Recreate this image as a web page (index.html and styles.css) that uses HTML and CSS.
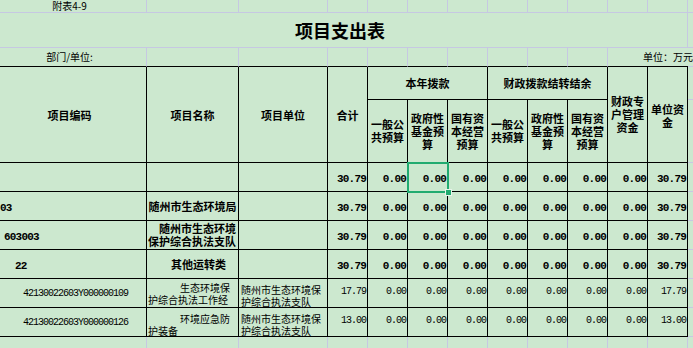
FILE: index.html
```html
<!DOCTYPE html>
<html lang="zh-CN">
<head>
<meta charset="utf-8">
<title>项目支出表</title>
<link rel="stylesheet" href="styles.css">
</head>
<body>
<div class="sheet">
  <!-- row 1 -->
  <div class="c">附表4-9</div>
  <div class="c"></div><div class="c"></div><div class="c"></div><div class="c"></div><div class="c"></div><div class="c"></div>
  <div class="c"></div><div class="c"></div><div class="c"></div><div class="c"></div><div class="c"></div><div class="c"></div>
  <!-- row 2 -->
  <div class="c title sp12">项目支出表</div>
  <div class="c"></div>
  <!-- row 3 -->
  <div class="c tb">部门/单位:</div>
  <div class="c tb"></div><div class="c tb"></div><div class="c tb"></div><div class="c tb"></div><div class="c tb"></div>
  <div class="c tb"></div><div class="c tb"></div><div class="c tb"></div><div class="c tb"></div>
  <div class="c tb nr"></div>
  <div class="c tb nr unit">单位：万元</div>
  <div class="c"></div>
  <!-- row 4 -->
  <div class="c t h sp2 hd">项目编码</div>
  <div class="c t h sp2 hd">项目名称</div>
  <div class="c t h sp2 hd">项目单位</div>
  <div class="c t h sp2 hd">合计</div>
  <div class="c t h sp3">本年拨款</div>
  <div class="c t h sp3">财政拨款结转结余</div>
  <div class="c t h sp2">财政专户管理资金</div>
  <div class="c t h sp2 hd">单位资金</div>
  <div class="c"></div>
  <!-- row 5 -->
  <div class="c t h">一般公共预算</div>
  <div class="c t h">政府性基金预算</div>
  <div class="c t h">国有资本经营预算</div>
  <div class="c t h">一般公共预算</div>
  <div class="c t h">政府性基金预算</div>
  <div class="c t h">国有资本经营预算</div>
  <div class="c"></div>
  <!-- row 6 -->
  <div class="c t"></div><div class="c t"></div><div class="c t"></div>
  <div class="c t num b">30.79</div>
  <div class="c t num b">0.00</div>
  <div class="c t num b sel">0.00<span class="cursor"></span></div>
  <div class="c t num b">0.00</div><div class="c t num b">0.00</div><div class="c t num b">0.00</div>
  <div class="c t num b">0.00</div><div class="c t num b">0.00</div>
  <div class="c t num b">30.79</div>
  <div class="c"></div>
  <!-- row 7 -->
  <div class="c t num b code" style="padding-left:7px">03</div>
  <div class="c t bt">随州市生态环境局</div>
  <div class="c t"></div>
  <div class="c t num b">30.79</div>
  <div class="c t num b">0.00</div><div class="c t num b">0.00</div><div class="c t num b">0.00</div>
  <div class="c t num b">0.00</div><div class="c t num b">0.00</div><div class="c t num b">0.00</div><div class="c t num b">0.00</div>
  <div class="c t num b">30.79</div>
  <div class="c"></div>
  <!-- row 8 -->
  <div class="c t num b code" style="padding-left:11px">603003</div>
  <div class="c t bt rt"><span>随州市生态环境<br>保护综合执法支队</span></div>
  <div class="c t"></div>
  <div class="c t num b">30.79</div>
  <div class="c t num b">0.00</div><div class="c t num b">0.00</div><div class="c t num b">0.00</div>
  <div class="c t num b">0.00</div><div class="c t num b">0.00</div><div class="c t num b">0.00</div><div class="c t num b">0.00</div>
  <div class="c t num b">30.79</div>
  <div class="c"></div>
  <!-- row 9 -->
  <div class="c t num b code" style="padding-left:22px">22</div>
  <div class="c t bt rt cls">其他运转类</div>
  <div class="c t"></div>
  <div class="c t num b">30.79</div>
  <div class="c t num b">0.00</div><div class="c t num b">0.00</div><div class="c t num b">0.00</div>
  <div class="c t num b">0.00</div><div class="c t num b">0.00</div><div class="c t num b">0.00</div><div class="c t num b">0.00</div>
  <div class="c t num b">30.79</div>
  <div class="c"></div>
  <!-- row 10 -->
  <div class="c t num pcode">42130022603Y000000109</div>
  <div class="c t txt name n1">生态环境保<br>护综合执法工作经<br>费</div>
  <div class="c t txt unitcol">随州市生态环境保<br>护综合执法支队</div>
  <div class="c t num">17.79</div>
  <div class="c t num">0.00</div><div class="c t num">0.00</div><div class="c t num">0.00</div>
  <div class="c t num">0.00</div><div class="c t num">0.00</div><div class="c t num">0.00</div><div class="c t num">0.00</div>
  <div class="c t num">17.79</div>
  <div class="c"></div>
  <!-- row 11 -->
  <div class="c t num pcode">42130022603Y000000126</div>
  <div class="c t txt name n2">环境应急防<br>护装备</div>
  <div class="c t txt unitcol">随州市生态环境保<br>护综合执法支队</div>
  <div class="c t num">13.00</div>
  <div class="c t num">0.00</div><div class="c t num">0.00</div><div class="c t num">0.00</div>
  <div class="c t num">0.00</div><div class="c t num">0.00</div><div class="c t num">0.00</div><div class="c t num">0.00</div>
  <div class="c t num">13.00</div>
  <div class="c"></div>
  <!-- row 12 -->
  <div class="c"></div><div class="c"></div><div class="c"></div><div class="c"></div><div class="c"></div><div class="c"></div><div class="c"></div>
  <div class="c"></div><div class="c"></div><div class="c"></div><div class="c"></div><div class="c"></div><div class="c"></div>
</div>
</body>
</html>
```

FILE: styles.css
```css
* { box-sizing: border-box; }
html, body { margin: 0; padding: 0; }
body {
  background: #cce8cf;
  width: 693px;
  height: 348px;
  overflow: hidden;
  font-family: "Noto Sans CJK SC", "Noto Sans", sans-serif;
  font-size: 10px;
  color: #000;
}
.sheet {
  display: grid;
  grid-template-columns: 154px 92px 89px repeat(9, 40px) 60px;
  grid-template-rows: 13px 35px 19px 33px 63px repeat(6, 29px) 20px;
  width: 755px;
  margin-left: -7px;
}
.c {
  border-right: 1px solid #c6c8e2;
  border-bottom: 1px solid #c6c8e2;
  display: flex;
  align-items: center;
  justify-content: center;
  overflow: hidden;
  white-space: nowrap;
  line-height: 12px;
  min-width: 0;
}
.t { border-right-color: #000; border-bottom-color: #000; }
.tb { border-bottom-color: #000; }
.nr { border-right: none; }
.sp2 { grid-row: span 2; }
.sp3 { grid-column: span 3; }
.sp12 { grid-column: span 12; }
.title { font-size: 18px; font-weight: 700; line-height: 20px; }
.unit { overflow: visible; }
.h {
  font-size: 11px;
  font-weight: 700;
  white-space: normal;
  text-align: center;
  line-height: 13px;
  padding: 0 2px;
}
.hd { padding-top: 2px; }
.bt { font-size: 11px; font-weight: 700; line-height: 13px; }
.rt { justify-content: flex-end; text-align: right; padding-right: 2px; }
.cls { padding-right: 12px; }
.num {
  font-family: "Liberation Mono", "DejaVu Sans Mono", monospace;
  font-size: 10px;
  letter-spacing: -1px;
  justify-content: flex-end;
  padding-right: 1px;
  padding-bottom: 3px;
}
.num.b {
  font-size: 11px;
  font-weight: 700;
  letter-spacing: -0.8px;
  padding-bottom: 0;
  padding-top: 3px;
}
.code { justify-content: flex-start; padding-right: 0; }
.pcode { justify-content: flex-start; padding-left: 30px; padding-bottom: 0; padding-top: 2px; }
.txt {
  display: block;
  white-space: nowrap;
  line-height: 12px;
}
.name { padding-left: 1px; text-indent: 32px; }
.name.n1 { padding-top: 3px; }
.name.n2 { padding-top: 5px; }
.unitcol { padding-left: 2px; padding-top: 5px; }
.sel { position: relative; overflow: visible; }
.cursor {
  position: absolute;
  left: -1px;
  top: -1px;
  right: -2px;
  bottom: -2px;
  border: 2px solid #21ab70;
}
.cursor::after {
  content: "";
  position: absolute;
  right: -4px;
  bottom: -4px;
  width: 5px;
  height: 5px;
  background: #21ab70;
  outline: 1px solid #e8f4ea;
}
```
